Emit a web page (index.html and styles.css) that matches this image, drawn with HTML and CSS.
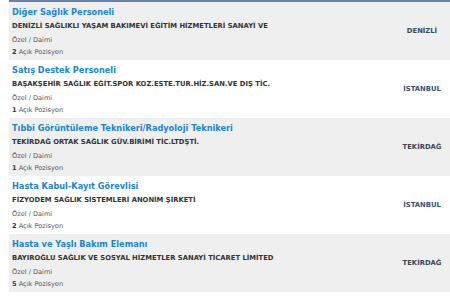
FILE: index.html
```html
<!DOCTYPE html>
<html lang="tr">
<head>
<meta charset="utf-8">
<link rel="stylesheet" href="styles.css">
</head>
<body>
<div class="list">
  <div class="row alt">
    <div class="info">
      <a class="title">Diğer Sağlık Personeli</a>
      <div class="company">DENİZLİ SAĞLIKLI YAŞAM BAKIMEVİ EĞİTİM HİZMETLERİ SANAYİ VE</div>
      <div class="meta">Özel / Daimi</div>
      <div class="meta"><b>2</b> Açık Pozisyon</div>
    </div>
    <div class="city">DENİZLİ</div>
  </div>
  <div class="row">
    <div class="info">
      <a class="title">Satış Destek Personeli</a>
      <div class="company">BAŞAKŞEHİR SAĞLIK EĞİT.SPOR KOZ.ESTE.TUR.HİZ.SAN.VE DIŞ TİC.</div>
      <div class="meta">Özel / Daimi</div>
      <div class="meta"><b>1</b> Açık Pozisyon</div>
    </div>
    <div class="city">İSTANBUL</div>
  </div>
  <div class="row alt">
    <div class="info">
      <a class="title">Tıbbi Görüntüleme Teknikeri/Radyoloji Teknikeri</a>
      <div class="company">TEKİRDAĞ ORTAK SAĞLIK GÜV.BİRİMİ TİC.LTDŞTİ.</div>
      <div class="meta">Özel / Daimi</div>
      <div class="meta"><b>1</b> Açık Pozisyon</div>
    </div>
    <div class="city">TEKİRDAĞ</div>
  </div>
  <div class="row">
    <div class="info">
      <a class="title">Hasta Kabul-Kayıt Görevlisi</a>
      <div class="company">FİZYODEM SAĞLIK SİSTEMLERİ ANONİM ŞİRKETİ</div>
      <div class="meta">Özel / Daimi</div>
      <div class="meta"><b>2</b> Açık Pozisyon</div>
    </div>
    <div class="city">İSTANBUL</div>
  </div>
  <div class="row alt">
    <div class="info">
      <a class="title">Hasta ve Yaşlı Bakım Elemanı</a>
      <div class="company">BAYIROĞLU SAĞLIK VE SOSYAL HİZMETLER SANAYİ TİCARET LİMİTED</div>
      <div class="meta">Özel / Daimi</div>
      <div class="meta"><b>5</b> Açık Pozisyon</div>
    </div>
    <div class="city">TEKİRDAĞ</div>
  </div>
</div>
</body>
</html>
```
FILE: styles.css
```css
html, body {
  margin: 0;
  padding: 0;
  background: #ffffff;
}
body {
  font-family: "DejaVu Sans", Verdana, sans-serif;
}
.list {
  margin-left: 9px;
  border-top: 2px solid #6a82a6;
}
.row {
  display: flex;
  align-items: flex-start;
  height: 58px;
  box-sizing: border-box;
  background: #ffffff;
}
.row.alt {
  background: #efefef;
}
.info {
  flex: 1;
  padding-left: 3px;
  padding-top: 3px;
  display: flex;
  flex-direction: column;
}
.title {
  font-size: 8.2px;
  font-weight: bold;
  color: #1d86c9;
  line-height: 14px;
  height: 14px;
}
.company {
  font-size: 6.8px;
  font-weight: bold;
  color: #333333;
  line-height: 15px;
}
.meta {
  font-size: 6.6px;
  color: #555555;
  line-height: 12px;
}
.meta b {
  color: #333333;
}
.city {
  align-self: center;
  width: 56px;
  text-align: center;
  font-size: 6.8px;
  font-weight: bold;
  color: #3c4658;
}
.row:nth-child(even) .city {
  color: #34517a;
}
```
